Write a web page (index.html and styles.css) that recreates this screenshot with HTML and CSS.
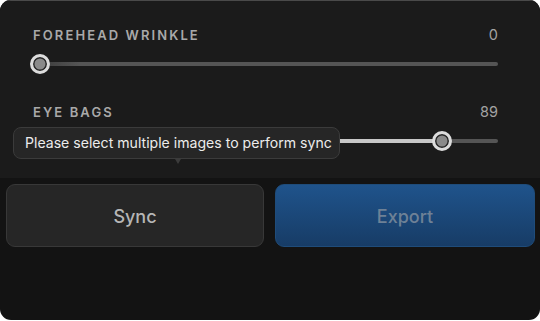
FILE: index.html
```html
<!DOCTYPE html>
<html>
<head>
<meta charset="utf-8">
<link rel="stylesheet" href="styles.css">
</head>
<body>
<div class="panel">
  <div class="sliders">
    <div class="slider">
      <div class="slider-head">
        <span class="slider-label">FOREHEAD WRINKLE</span>
        <span class="slider-value">0</span>
      </div>
      <div class="slider-track">
        <div class="track-bar">
          <div class="track-fill" style="width:0%"></div>
        </div>
        <div class="thumb" style="left:0%"></div>
      </div>
    </div>
    <div class="slider">
      <div class="slider-head">
        <span class="slider-label">EYE BAGS</span>
        <span class="slider-value">89</span>
      </div>
      <div class="slider-track">
        <div class="track-bar">
          <div class="track-fill" style="width:87.8%"></div>
        </div>
        <div class="thumb" style="left:87.8%"></div>
      </div>
    </div>
    <div class="tooltip">Please select multiple images to perform sync<span class="tooltip-arrow"></span></div>
  </div>
  <div class="actions">
    <button class="btn btn-sync">Sync</button>
    <button class="btn btn-export">Export</button>
  </div>
</div>
</body>
</html>
```
FILE: styles.css
```css
html, body {
  margin: 0;
  padding: 0;
  background: #ffffff;
}
body {
  font-family: Inter, "Noto Sans", sans-serif;
  width: 540px;
  height: 321px;
  overflow: hidden;
}
.panel {
  width: 540px;
  height: 320px;
  border-radius: 11px;
  overflow: hidden;
  background: #131313;
  display: flex;
  flex-direction: column;
}
.sliders {
  position: relative;
  background: #1b1b1b;
  padding: 26px 42px 27px 30px;
  display: flex;
  flex-direction: column;
  gap: 30px;
  border-top: 1px solid #4a4a4a;
}
.slider-head {
  display: flex;
  justify-content: space-between;
  align-items: center;
  height: 16px;
  line-height: 16px;
  padding-left: 3px;
}
.slider-label {
  font-size: 13px;
  font-weight: 600;
  letter-spacing: 2.1px;
  color: #a9a9a9;
}
.slider-value {
  font-size: 14.5px;
  color: #a3a3a3;
}
.slider-track {
  position: relative;
  height: 20px;
  margin-top: 11px;
  margin-left: 10px;
}
.track-bar {
  position: absolute;
  left: 0;
  right: 0;
  top: 8px;
  height: 4px;
  border-radius: 2px;
  background: linear-gradient(90deg, #3c3c3c 0, #555555 40px, #555555 100%);
}
.track-fill {
  height: 100%;
  border-radius: 2px;
  background: #c8c8c8;
}
.thumb {
  position: absolute;
  top: 0;
  width: 20px;
  height: 20px;
  margin-left: -10px;
  box-sizing: border-box;
  border-radius: 50%;
  border: 3px solid #dcdcdc;
  background: #8a8a8a;
  box-shadow: inset 0 0 0 1.5px #262626;
}
.tooltip {
  position: absolute;
  left: 13px;
  top: 126px;
  width: 327px;
  height: 32px;
  box-sizing: border-box;
  padding-left: 11px;
  line-height: 30px;
  font-size: 14.1px;
  color: #ececec;
  background: #262626;
  border: 1px solid #3b3b3b;
  border-radius: 8px;
  white-space: nowrap;
}
.tooltip-arrow {
  position: absolute;
  left: 161px;
  top: 31px;
  width: 0;
  height: 0;
  border-left: 3px solid transparent;
  border-right: 3px solid transparent;
  border-top: 5px solid #3b3b3b;
}
.actions {
  flex: 1;
  display: flex;
  gap: 11px;
  padding: 6px 5px 0 6px;
  align-items: flex-start;
}
.btn {
  height: 63px;
  border-radius: 9px;
  font-family: Inter, "Noto Sans", sans-serif;
  font-size: 18px;
  font-weight: 500;
  padding-top: 3px;
  cursor: pointer;
}
.btn-sync {
  flex: 0 0 258px;
  background: #262626;
  border: 1px solid #383838;
  color: #b6b6b6;
}
.btn-export {
  flex: 1;
  background: linear-gradient(180deg, #1f538b 0%, #173c66 100%);
  border: 1px solid #1f4c7a;
  color: #6e8196;
}
```
